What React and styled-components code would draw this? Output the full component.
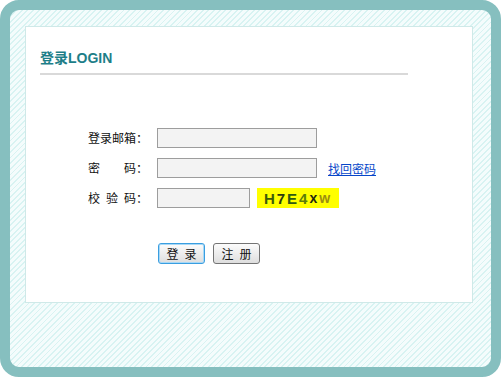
import React from 'react';
import styled, { createGlobalStyle } from 'styled-components';

const GlobalStyle = createGlobalStyle`
  body {
    margin: 0;
    background: #fff;
    font-family: 'Noto Sans CJK SC', 'Liberation Sans', sans-serif;
    font-size: 12px;
  }
`;

const Frame = styled.div`
  box-sizing: border-box;
  width: 501px;
  height: 377px;
  padding: 16px 18px 0 15px;
  border: 10px solid #86bfbf;
  border-radius: 19px;
  background: repeating-linear-gradient(135deg, #d8f3f2 0 1.3px, #f4fcfc 1.3px 4px);
`;

const Panel = styled.div`
  box-sizing: border-box;
  width: 448px;
  height: 277px;
  padding: 21px 0 0 14px;
  background: #fff;
  border: 1px solid #cfe9e8;
`;

const Title = styled.h2`
  width: 368px;
  height: 20px;
  margin: 0;
  padding-bottom: 5px;
  border-bottom: 2px solid #d9d9d9;
  font-family: 'Liberation Sans', 'Noto Sans CJK SC', sans-serif;
  font-size: 14px;
  font-weight: bold;
  line-height: 20px;
  color: #1d7e88;
`;

const Form = styled.div`
  display: flex;
  flex-direction: column;
  margin: 48px 0 0 48px;
`;

const Row = styled.div`
  display: flex;
  align-items: center;
  height: 30px;
`;

const Label = styled.span`
  width: 69px;
  color: #111;
  line-height: 20px;
  white-space: pre;
`;

const Input = styled.input`
  box-sizing: border-box;
  width: ${(p) => p.$w}px;
  height: 20px;
  margin: 0;
  padding: 0 3px;
  border: 1px solid #9d9d9d;
  background: #f3f3f3;
  outline: none;
`;

const Link = styled.a`
  margin-left: 11px;
  color: #0646c9;
  text-decoration: underline;
  cursor: pointer;
`;

const Captcha = styled.span`
  display: flex;
  align-items: center;
  justify-content: center;
  width: 82px;
  height: 20px;
  margin-left: 7px;
  background: #ffff00;
  font-family: 'Liberation Sans', sans-serif;
  font-weight: bold;
  letter-spacing: 2px;
`;

const Char = styled.span`
  color: ${(p) => p.$c};
  font-size: ${(p) => p.$s || 15}px;
`;

const Buttons = styled.div`
  display: flex;
  gap: 8px;
  margin: 30px 0 0 70px;
`;

const Button = styled.button`
  box-sizing: border-box;
  width: 47px;
  height: 21px;
  padding: 0;
  border: 1px solid ${(p) => (p.$focus ? '#3a9ee0' : '#747474')};
  border-radius: 3px;
  background: linear-gradient(#fcfcfc, #dedede);
  box-shadow: ${(p) => (p.$focus ? 'inset 0 0 0 1px #a8d8f6' : 'none')};
  font-family: 'Noto Sans CJK SC', sans-serif;
  font-size: 12px;
  line-height: 19px;
  color: #111;
`;

const captcha = [
  ['H', '#3d5c08'],
  ['7', '#2b3a10'],
  ['E', '#2f5a12'],
  ['4', '#5b7c0a'],
  ['x', '#1e2810', 14],
  ['w', '#9c8e10', 14],
];

const App = () => (
  <>
    <GlobalStyle />
    <Frame>
      <Panel>
        <Title>登录LOGIN</Title>
        <Form>
          <Row>
            <Label>登录邮箱：</Label>
            <Input $w={160} />
          </Row>
          <Row>
            <Label>密　　码：</Label>
            <Input $w={160} type="password" />
            <Link>找回密码</Link>
          </Row>
          <Row>
            <Label>校&ensp;验&ensp;码：</Label>
            <Input $w={93} />
            <Captcha>
              {captcha.map(([ch, c, s]) => (
                <Char key={ch} $c={c} $s={s}>{ch}</Char>
              ))}
            </Captcha>
          </Row>
          <Buttons>
            <Button $focus>登&ensp;录</Button>
            <Button>注&ensp;册</Button>
          </Buttons>
        </Form>
      </Panel>
    </Frame>
  </>
);

export default App;
